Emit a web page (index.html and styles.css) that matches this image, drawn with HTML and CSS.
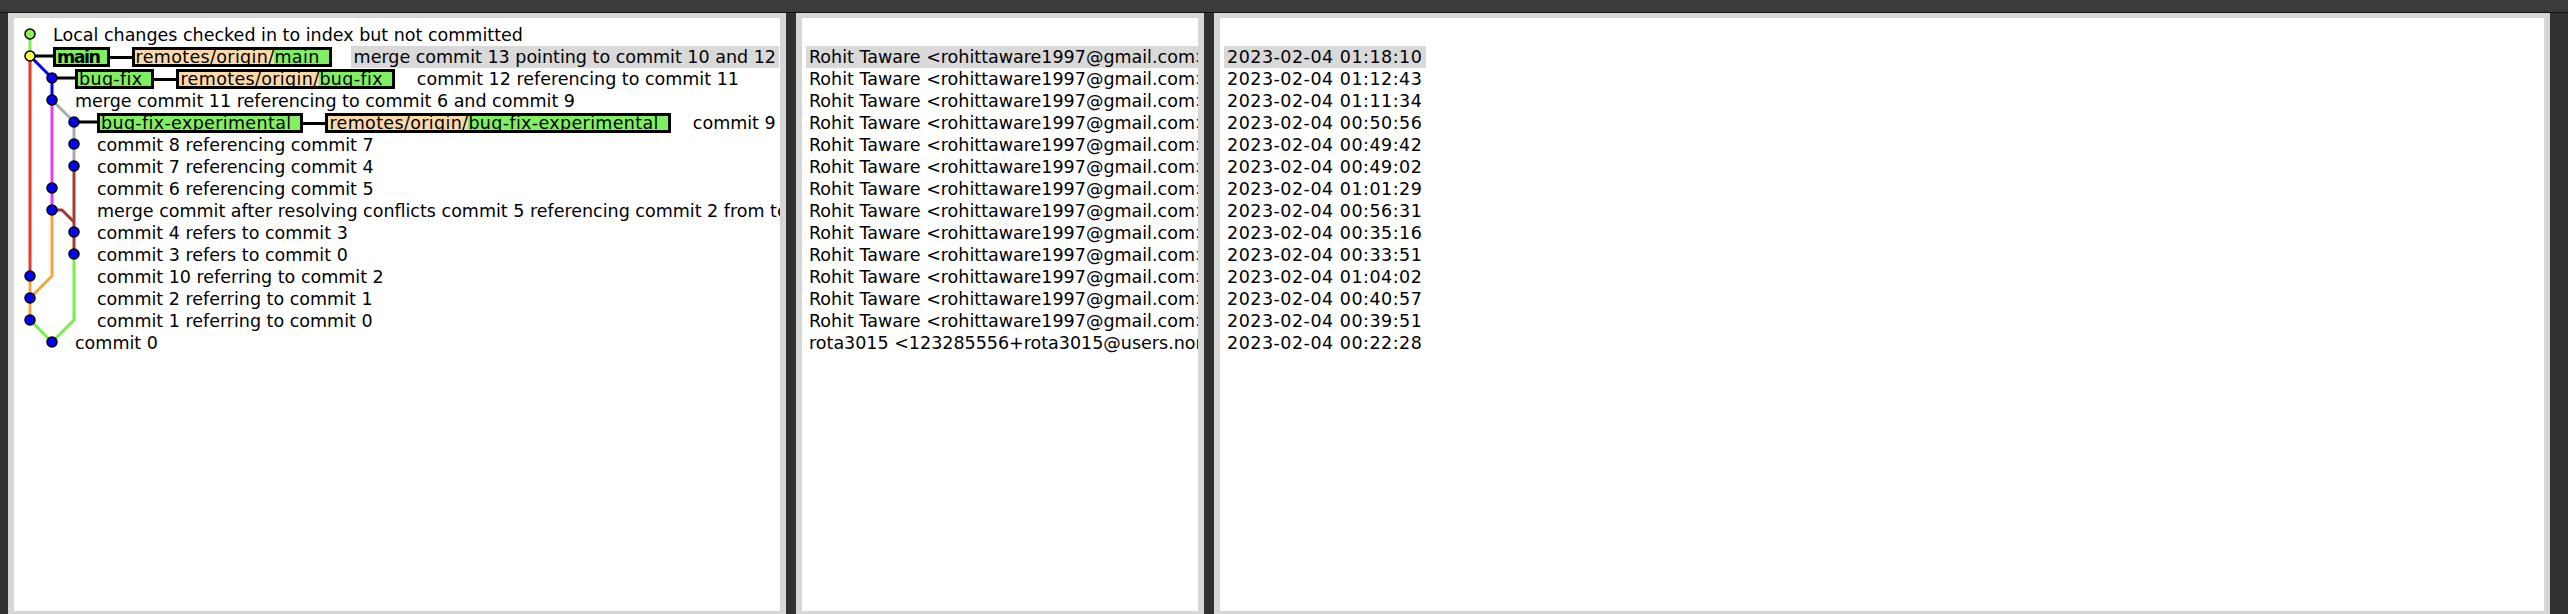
FILE: index.html
```html
<!DOCTYPE html>
<html>
<head>
<meta charset="utf-8">
<title>Commit graph</title>
<link rel="stylesheet" href="styles.css">
</head>
<body>
<div class="titlebar"></div>
<div class="split">
  <div class="pane graph-pane">
    <svg class="graph" width="100" height="340" viewBox="0 0 100 340">
      <g fill="none" stroke-width="3" stroke-linejoin="round">
        <path d="M16 16 V38" stroke="#84ee4c"/>
        <path d="M16 38 V258" stroke="#e8392a"/>
        <path d="M16 38 L38 60 V82" stroke="#0000ff"/>
        <path d="M38 82 V192" stroke="#e63ff0"/>
        <path d="M38 82 L60 104 V148" stroke="#aaaaaa"/>
        <path d="M60 148 V236" stroke="#a33b32"/>
        <path d="M38 192 H48 L60 204" stroke="#a33b32"/>
        <path d="M60 236 V302 L38 324" stroke="#74f04a"/>
        <path d="M38 192 V258 L16 280" stroke="#f2a640"/>
        <path d="M16 258 V302" stroke="#f2a640"/>
        <path d="M16 302 L38 324" stroke="#74f04a"/>
        <path d="M16 38 H39 M38 60 H61 M60 104 H83" stroke="#000"/>
      </g>
      <g stroke="#000" stroke-width="1.5">
        <circle cx="16" cy="16" r="5" fill="#8cf050"/>
        <circle cx="16" cy="38" r="5" fill="#ffff55"/>
        <circle cx="38" cy="60" r="5" fill="#0000ff"/>
        <circle cx="38" cy="82" r="5" fill="#0000ff"/>
        <circle cx="60" cy="104" r="5" fill="#0000ff"/>
        <circle cx="60" cy="126" r="5" fill="#0000ff"/>
        <circle cx="60" cy="148" r="5" fill="#0000ff"/>
        <circle cx="38" cy="170" r="5" fill="#0000ff"/>
        <circle cx="38" cy="192" r="5" fill="#0000ff"/>
        <circle cx="60" cy="214" r="5" fill="#0000ff"/>
        <circle cx="60" cy="236" r="5" fill="#0000ff"/>
        <circle cx="16" cy="258" r="5" fill="#0000ff"/>
        <circle cx="16" cy="280" r="5" fill="#0000ff"/>
        <circle cx="16" cy="302" r="5" fill="#0000ff"/>
        <circle cx="38" cy="324" r="5" fill="#0000ff"/>
      </g>
    </svg>
    <div class="rows">
      <div class="row ind1"><span class="msg">Local changes checked in to index but not committed</span></div>
      <div class="row ind1"><span class="ref head">main</span><span class="link"></span><span class="ref"><span class="remote">remotes/origin/</span>main</span><span class="msg sel">merge commit 13 pointing to commit 10 and 12</span></div>
      <div class="row ind2"><span class="ref">bug-fix</span><span class="link"></span><span class="ref"><span class="remote">remotes/origin/</span>bug-fix</span><span class="msg">commit 12 referencing to commit 11</span></div>
      <div class="row ind2"><span class="msg">merge commit 11 referencing to commit 6 and commit 9</span></div>
      <div class="row ind3"><span class="ref">bug-fix-experimental</span><span class="link"></span><span class="ref"><span class="remote">remotes/origin/</span>bug-fix-experimental</span><span class="msg">commit 9</span></div>
      <div class="row ind3"><span class="msg">commit 8 referencing commit 7</span></div>
      <div class="row ind3"><span class="msg">commit 7 referencing commit 4</span></div>
      <div class="row ind3"><span class="msg">commit 6 referencing commit 5</span></div>
      <div class="row ind3"><span class="msg">merge commit after resolving conflicts commit 5 referencing commit 2 from test branch</span></div>
      <div class="row ind3"><span class="msg">commit 4 refers to commit 3</span></div>
      <div class="row ind3"><span class="msg">commit 3 refers to commit 0</span></div>
      <div class="row ind3"><span class="msg">commit 10 referring to commit 2</span></div>
      <div class="row ind3"><span class="msg">commit 2 referring to commit 1</span></div>
      <div class="row ind3"><span class="msg">commit 1 referring to commit 0</span></div>
      <div class="row ind2"><span class="msg">commit 0</span></div>
    </div>
  </div>
  <div class="pane author-pane">
    <div class="rows">
      <div class="row cell"></div>
      <div class="row cell"><span class="msg sel">Rohit Taware &lt;rohittaware1997@gmail.com&gt;</span></div>
      <div class="row cell"><span class="msg">Rohit Taware &lt;rohittaware1997@gmail.com&gt;</span></div>
      <div class="row cell"><span class="msg">Rohit Taware &lt;rohittaware1997@gmail.com&gt;</span></div>
      <div class="row cell"><span class="msg">Rohit Taware &lt;rohittaware1997@gmail.com&gt;</span></div>
      <div class="row cell"><span class="msg">Rohit Taware &lt;rohittaware1997@gmail.com&gt;</span></div>
      <div class="row cell"><span class="msg">Rohit Taware &lt;rohittaware1997@gmail.com&gt;</span></div>
      <div class="row cell"><span class="msg">Rohit Taware &lt;rohittaware1997@gmail.com&gt;</span></div>
      <div class="row cell"><span class="msg">Rohit Taware &lt;rohittaware1997@gmail.com&gt;</span></div>
      <div class="row cell"><span class="msg">Rohit Taware &lt;rohittaware1997@gmail.com&gt;</span></div>
      <div class="row cell"><span class="msg">Rohit Taware &lt;rohittaware1997@gmail.com&gt;</span></div>
      <div class="row cell"><span class="msg">Rohit Taware &lt;rohittaware1997@gmail.com&gt;</span></div>
      <div class="row cell"><span class="msg">Rohit Taware &lt;rohittaware1997@gmail.com&gt;</span></div>
      <div class="row cell"><span class="msg">Rohit Taware &lt;rohittaware1997@gmail.com&gt;</span></div>
      <div class="row cell"><span class="msg">rota3015 &lt;123285556+rota3015@users.noreply.github.com&gt;</span></div>
    </div>
  </div>
  <div class="pane date-pane">
    <div class="rows dates">
      <div class="row cell"></div>
      <div class="row cell"><span class="msg sel">2023-02-04 01:18:10</span></div>
      <div class="row cell"><span class="msg">2023-02-04 01:12:43</span></div>
      <div class="row cell"><span class="msg">2023-02-04 01:11:34</span></div>
      <div class="row cell"><span class="msg">2023-02-04 00:50:56</span></div>
      <div class="row cell"><span class="msg">2023-02-04 00:49:42</span></div>
      <div class="row cell"><span class="msg">2023-02-04 00:49:02</span></div>
      <div class="row cell"><span class="msg">2023-02-04 01:01:29</span></div>
      <div class="row cell"><span class="msg">2023-02-04 00:56:31</span></div>
      <div class="row cell"><span class="msg">2023-02-04 00:35:16</span></div>
      <div class="row cell"><span class="msg">2023-02-04 00:33:51</span></div>
      <div class="row cell"><span class="msg">2023-02-04 01:04:02</span></div>
      <div class="row cell"><span class="msg">2023-02-04 00:40:57</span></div>
      <div class="row cell"><span class="msg">2023-02-04 00:39:51</span></div>
      <div class="row cell"><span class="msg">2023-02-04 00:22:28</span></div>
    </div>
  </div>
</div>
</body>
</html>
```
FILE: styles.css
```css
* { box-sizing: border-box; }
html, body { margin: 0; padding: 0; }
body {
  width: 2568px;
  height: 614px;
  overflow: hidden;
  background: #313131;
  font-family: "DejaVu Sans", "Verdana", sans-serif;
  font-size: 17.5px;
  color: #000;
}
.titlebar {
  height: 13px;
  background: #3b3b3b;
  border-bottom: 1px solid #121212;
}
.split {
  display: flex;
  height: 601px;
  padding-left: 8px;
  gap: 10px;
}
.pane {
  position: relative;
  flex: none;
  height: 601px;
  background: #fff;
  border: 6px solid #d6d6d6;
  border-top-width: 5px;
  border-bottom-width: 3px;
  overflow: hidden;
}
.graph-pane { width: 778px; }
.author-pane { width: 408px; }
.date-pane { width: 1336px; }
.graph {
  position: absolute;
  left: 0;
  top: 0;
}
.rows {
  padding-top: 6px;
}
.row {
  display: flex;
  align-items: stretch;
  height: 22px;
  white-space: nowrap;
  overflow: hidden;
}
.ind1 { padding-left: 39px; }
.ind2 { padding-left: 61px; }
.ind3 { padding-left: 83px; }
.cell { padding-left: 4px; }
.msg {
  flex: none;
  height: 22px;
  line-height: 21px;
  padding: 1px 3px 0;
}
.ind1 > .msg:first-child,
.ind2 > .msg:first-child,
.ind3 > .msg:first-child { margin-left: -3px; }
.ref + .msg { margin-left: 19px; }
.sel { background: #d9d9d9; }
.dates .msg { letter-spacing: 0.5px; padding-right: 4px; }
.ref {
  flex: none;
  align-self: center;
  display: flex;
  height: 20px;
  line-height: 14px;
  border: 3px solid #000;
  background: #80f060;
  padding: 0 9px 0 1px;
  letter-spacing: 0.35px;
}
.ref .remote {
  background: #fcd9a8;
  margin-left: -1px;
  padding-left: 1px;
}
.head {
  font-weight: bold;
  letter-spacing: -1.5px;
  padding-right: 7px;
}
.link {
  flex: none;
  align-self: center;
  width: 22px;
  height: 3px;
  background: #000;
}
```
